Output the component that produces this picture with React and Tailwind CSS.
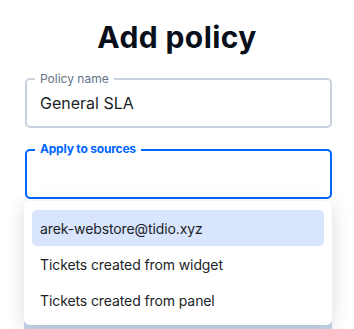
export default function App() {
  const sources = [
    "arek-webstore@tidio.xyz",
    "Tickets created from widget",
    "Tickets created from panel",
  ];

  return (
    <div className="w-[354px] h-[329px] overflow-hidden bg-white font-['Inter',sans-serif] text-[#1b1f27]">
      <div className="flex flex-col pt-[19px] px-[22px]">
        <h1 className="text-center text-[30px] leading-[36px] font-bold tracking-[0.4px] text-[#080f1a]">
          Add policy
        </h1>

        <div className="relative mt-[23px] ml-[3px] w-[307px] h-[50px] rounded-[5px] border-2 border-[#cad2de] flex items-center pl-[13px]">
          <span className="absolute -top-[9px] left-[8px] bg-white px-[5px] text-[12px] leading-[16px] text-[#647389]">
            Policy name
          </span>
          <span className="text-[16px]">General SLA</span>
        </div>

        <div className="relative mt-[21px] ml-[3px] w-[307px] h-[50px] rounded-[5px] border-2 border-[#0066ff]">
          <span className="absolute -top-[10px] left-[8px] bg-white px-[5px] text-[12px] leading-[16px] font-bold tracking-[-0.2px] text-[#0066ff]">
            Apply to sources
          </span>
        </div>

        <div className="relative ml-[2px] w-[308px]">
          <div className="mt-[120px] rounded-[5px] bg-[#c9d7ef] pt-[4px] pb-4 px-4 text-center text-[14px] leading-[24px] text-[#1b1f27]">
            <p>calendar hours, not including the weekends.</p>
          </div>

          <div className="absolute top-[2px] left-0 w-[308px] rounded-[6px] bg-white px-2 pt-[9px] pb-[7px] shadow-[0_4px_18px_rgba(20,30,50,0.16)]">
            <ul className="flex flex-col">
              {sources.map((s, i) => (
                <li
                  key={s}
                  className={`h-[36px] flex items-center px-2 rounded-[5px] text-[14px] tracking-[-0.1px] ${
                    i === 0 ? "bg-[#d8e5fd]" : ""
                  }`}
                >
                  {s}
                </li>
              ))}
            </ul>
          </div>
        </div>
      </div>
    </div>
  );
}
